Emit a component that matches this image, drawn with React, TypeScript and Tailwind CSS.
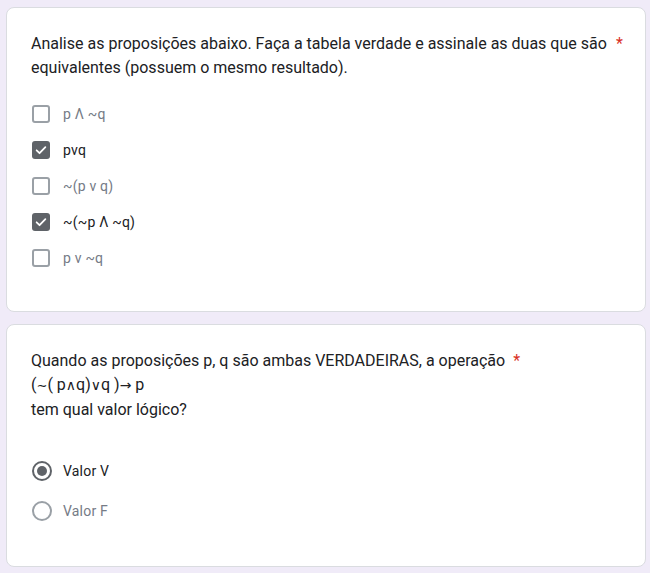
import React from 'react';

const options = [
  { label: "p Λ ~q", checked: false },
  { label: "pvq", checked: true },
  { label: "~(p v q)", checked: false },
  { label: "~(~p Λ ~q)", checked: true },
  { label: "p v ~q", checked: false },
];

const radios = [
  { label: "Valor V", checked: true },
  { label: "Valor F", checked: false },
];

const Checkbox: React.FC<{ checked: boolean }> = ({ checked }) =>
  checked ? (
    <span className="w-[18px] h-[18px] rounded-[3px] bg-[#5f6368] flex items-center justify-center">
      <svg width="14" height="14" viewBox="0 0 24 24" fill="none">
        <path d="M4.5 12.5l5 5L19.5 7" stroke="white" strokeWidth="3" strokeLinecap="round" strokeLinejoin="round" />
      </svg>
    </span>
  ) : (
    <span className="w-[18px] h-[18px] rounded-[3px] border-2 border-[#9aa0a6] bg-white" />
  );

const Radio: React.FC<{ checked: boolean }> = ({ checked }) => (
  <span
    className={`w-[20px] h-[20px] rounded-full border-2 flex items-center justify-center ${
      checked ? "border-[#5f6368]" : "border-[#9aa0a6]"
    }`}
  >
    {checked && <span className="w-[10px] h-[10px] rounded-full bg-[#5f6368]" />}
  </span>
);

export default function App() {
  return (
    <div className="bg-[#f0ebf8] min-h-[573px] pt-[7px] pb-[7px] font-['Roboto',sans-serif] text-[#202124]">
      {/* Pergunta 1 */}
      <section className="ml-[6px] w-[640px] bg-white border border-[#dadce0] rounded-[8px] pt-[24px] pl-[24px] pr-[22px] pb-[35px]">
        <div className="flex items-start">
          <div className="text-[16px] leading-[24px]">
            Analise as proposições abaixo. Faça a tabela verdade e assinale as duas que são equivalentes (possuem o mesmo resultado).
          </div>
          <span className="text-[#d93025] text-[16px] leading-[24px] pl-[3px] shrink-0">*</span>
        </div>
        <div className="mt-[16px] flex flex-col">
          {options.map((o, i) => (
            <div key={i} className="h-[36px] flex items-center gap-[13px] pl-px">
              <Checkbox checked={o.checked} />
              <span className={`text-[14px] tracking-[0.2px] ${o.checked ? "text-[#202124]" : "text-[#757b86]"}`}>
                {o.label}
              </span>
            </div>
          ))}
        </div>
      </section>

      {/* Pergunta 2 */}
      <section className="mt-[12px] ml-[6px] w-[640px] bg-white border border-[#dadce0] rounded-[8px] pt-[24px] px-[24px] pb-[35px]">
        <div className="flex items-start">
          <div className="text-[16px] leading-[24px]">
            Quando as proposições p, q são ambas VERDADEIRAS, a operação
            <br />
            (<span className="font-['DejaVu_Sans',sans-serif] text-[13px]">∼</span>( p<span className="font-['DejaVu_Sans',sans-serif] text-[14px]">∧</span>q)<span className="font-['DejaVu_Sans',sans-serif] text-[14px]">∨</span>q )<span className="font-['DejaVu_Sans',sans-serif] text-[14px]">→</span> p
            <br />
            tem qual valor lógico?
          </div>
          <span className="text-[#d93025] text-[16px] leading-[24px] pl-[8px] shrink-0">*</span>
        </div>
        <div className="mt-[29px] flex flex-col">
          {radios.map((r, i) => (
            <div key={i} className="h-[40px] flex items-center gap-[11px] pl-px">
              <Radio checked={r.checked} />
              <span className={`text-[14px] tracking-[0.2px] ${r.checked ? "text-[#202124]" : "text-[#757b86]"}`}>
                {r.label}
              </span>
            </div>
          ))}
        </div>
      </section>
    </div>
  );
}
